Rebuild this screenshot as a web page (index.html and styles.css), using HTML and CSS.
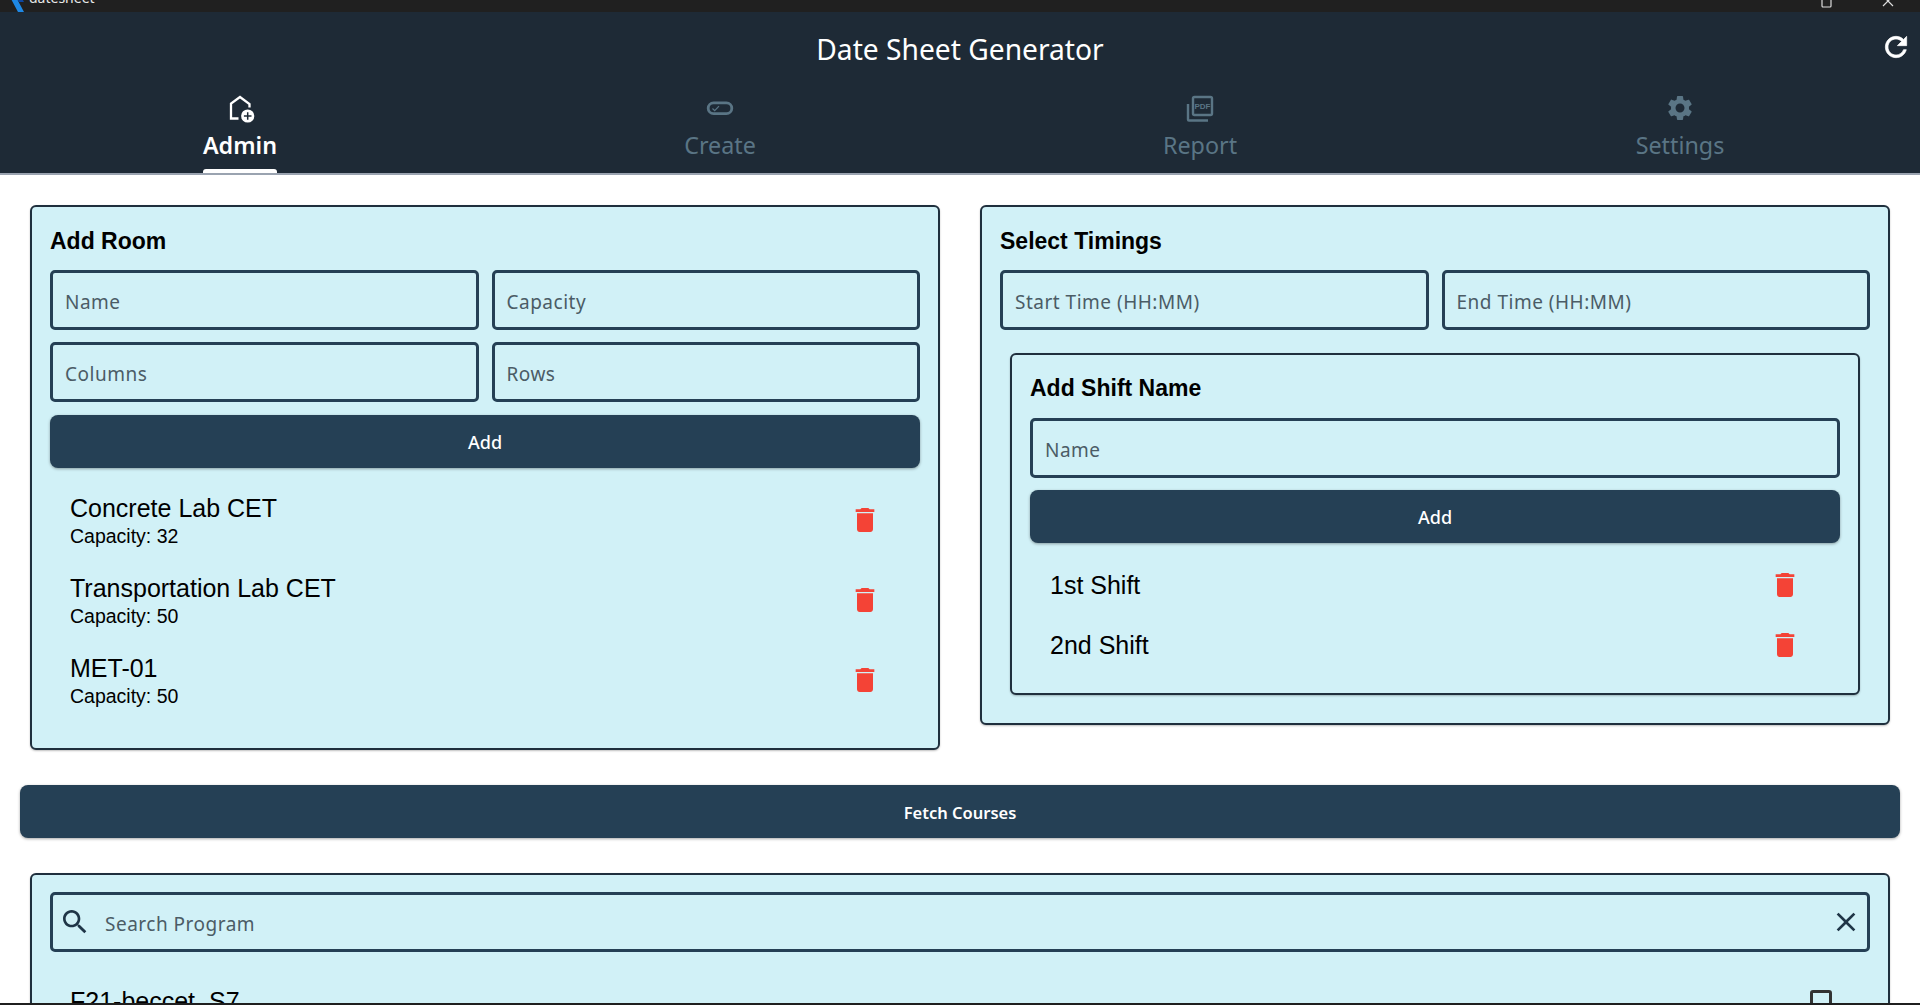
FILE: index.html
```html
<!DOCTYPE html>
<html>
<head>
	<title>datesheet</title>
	<link rel="stylesheet" href="styles.css">
</head>
<body>
	<div class="window-bar">
		<div class="window-row">
			<svg class="app-logo" viewBox="0 0 14 30"><path fill="#1e88e5" d="M8 0h6l-8 15 8 15H8L0 15z"/><path fill="#0d47a1" d="M6 15l3-4 5 9-5 0z"/></svg>
			<span class="window-name">datesheet</span>
			<span class="window-spacer"></span>
			<svg class="window-ctl" viewBox="0 0 12 30"><rect x="1" y="16" width="9" height="9" rx="1" fill="none" stroke="#ddd" stroke-width="1.2"/></svg>
			<svg class="window-ctl" viewBox="0 0 12 30"><path d="M1 14l10 10M11 14L1 24" stroke="#ddd" stroke-width="1.2"/></svg>
		</div>
	</div>

	<header class="app-header">
		<div class="title-row">
			<h1 class="app-title">Date Sheet Generator</h1>
			<svg class="refresh" viewBox="0 0 24 24"><path d="M17.65 6.35C16.2 4.9 14.21 4 12 4c-4.42 0-7.99 3.58-7.99 8s3.57 8 7.99 8c3.73 0 6.84-2.55 7.73-6h-2.08c-.82 2.33-3.04 4-5.65 4-3.31 0-6-2.69-6-6s2.69-6 6-6c1.66 0 3.14.69 4.22 1.78L13 11h7V4l-2.35 2.35z"/></svg>
		</div>
		<nav class="tabs">
			<div class="tab active">
				<svg class="tab-icon" viewBox="0 0 32 32">
					<path d="M14.5 26.5H7V11.5L16 5l9.5 7v3.5" fill="none" stroke="currentColor" stroke-width="2.3"/>
					<circle cx="23.7" cy="24" r="6.6" fill="currentColor"/>
					<path d="M23.7 20.2v7.6M19.9 24h7.6" stroke="#1e2a36" stroke-width="1.5"/>
				</svg>
				<span class="tab-label">Admin</span>
			</div>
			<div class="tab">
				<svg class="tab-icon" viewBox="0 0 32 32">
					<rect x="4.2" y="10.8" width="23.6" height="10.8" rx="5.4" fill="none" stroke="currentColor" stroke-width="2.8"/>
					<path d="M8.5 16.5l2.2 2.2 4.3-4.6" fill="none" stroke="currentColor" stroke-width="1.2"/>
				</svg>
				<span class="tab-label">Create</span>
			</div>
			<div class="tab">
				<svg class="tab-icon" viewBox="0 0 32 32">
					<rect x="9" y="5" width="19" height="18" rx="1.5" fill="none" stroke="currentColor" stroke-width="2.4"/>
					<path d="M4 12v15.5a1 1 0 0 0 1 1h19" fill="none" stroke="currentColor" stroke-width="2.4"/>
					<text class="pdf-mark" x="18.5" y="17" text-anchor="middle">PDF</text>
				</svg>
				<span class="tab-label">Report</span>
			</div>
			<div class="tab">
				<svg class="tab-icon gear" viewBox="0 0 24 24"><path d="M19.14 12.94c.04-.3.06-.61.06-.94 0-.32-.02-.64-.07-.94l2.03-1.58c.18-.14.23-.41.12-.61l-1.92-3.32c-.12-.22-.37-.29-.59-.22l-2.39.96c-.5-.38-1.03-.7-1.62-.94l-.36-2.54c-.04-.24-.24-.41-.48-.41h-3.84c-.24 0-.43.17-.47.41l-.36 2.54c-.59.24-1.13.57-1.62.94l-2.39-.96c-.22-.08-.47 0-.59.22L2.74 8.87c-.12.21-.08.47.12.61l2.03 1.58c-.05.3-.09.63-.09.94s.02.64.07.94l-2.03 1.58c-.18.14-.23.41-.12.61l1.92 3.32c.12.22.37.29.59.22l2.39-.96c.5.38 1.03.7 1.62.94l.36 2.54c.05.24.24.41.48.41h3.84c.24 0 .44-.17.47-.41l.36-2.54c.59-.24 1.13-.56 1.62-.94l2.39.96c.22.08.47 0 .59-.22l1.92-3.32c.12-.22.07-.47-.12-.61l-2.01-1.58zM12 15.6c-1.98 0-3.6-1.62-3.6-3.6s1.62-3.6 3.6-3.6 3.6 1.62 3.6 3.6-1.62 3.6-3.6 3.6z"/></svg>
				<span class="tab-label">Settings</span>
			</div>
		</nav>
	</header>

	<main class="content">
		<div class="columns">
			<section class="card">
				<h2 class="card-title">Add Room</h2>
				<div class="field-grid">
					<input class="field" placeholder="Name">
					<input class="field" placeholder="Capacity">
					<input class="field" placeholder="Columns">
					<input class="field" placeholder="Rows">
				</div>
				<button class="btn" type="button">Add</button>
				<ul class="room-list">
					<li class="room">
						<div>
							<div class="item-name">Concrete Lab CET</div>
							<div class="item-sub">Capacity: 32</div>
						</div>
						<svg class="trash" viewBox="0 0 24 24"><path d="M6 19c0 1.1.9 2 2 2h8c1.1 0 2-.9 2-2V7H6v12zM19 4h-3.5l-1-1h-5l-1 1H5v2h14V4z"/></svg>
					</li>
					<li class="room">
						<div>
							<div class="item-name">Transportation Lab CET</div>
							<div class="item-sub">Capacity: 50</div>
						</div>
						<svg class="trash" viewBox="0 0 24 24"><path d="M6 19c0 1.1.9 2 2 2h8c1.1 0 2-.9 2-2V7H6v12zM19 4h-3.5l-1-1h-5l-1 1H5v2h14V4z"/></svg>
					</li>
					<li class="room">
						<div>
							<div class="item-name">MET-01</div>
							<div class="item-sub">Capacity: 50</div>
						</div>
						<svg class="trash" viewBox="0 0 24 24"><path d="M6 19c0 1.1.9 2 2 2h8c1.1 0 2-.9 2-2V7H6v12zM19 4h-3.5l-1-1h-5l-1 1H5v2h14V4z"/></svg>
					</li>
				</ul>
			</section>

			<section class="card">
				<h2 class="card-title">Select Timings</h2>
				<div class="field-grid">
					<input class="field" placeholder="Start Time (HH:MM)">
					<input class="field" placeholder="End Time (HH:MM)">
				</div>
				<div class="card inner-card">
					<h2 class="card-title">Add Shift Name</h2>
					<input class="field" placeholder="Name">
					<button class="btn" type="button">Add</button>
					<ul class="shift-list">
						<li class="shift">
							<span class="item-name">1st Shift</span>
							<svg class="trash" viewBox="0 0 24 24"><path d="M6 19c0 1.1.9 2 2 2h8c1.1 0 2-.9 2-2V7H6v12zM19 4h-3.5l-1-1h-5l-1 1H5v2h14V4z"/></svg>
						</li>
						<li class="shift">
							<span class="item-name">2nd Shift</span>
							<svg class="trash" viewBox="0 0 24 24"><path d="M6 19c0 1.1.9 2 2 2h8c1.1 0 2-.9 2-2V7H6v12zM19 4h-3.5l-1-1h-5l-1 1H5v2h14V4z"/></svg>
						</li>
					</ul>
				</div>
			</section>
		</div>

		<button class="btn fetch" type="button">Fetch Courses</button>

		<section class="card programs">
			<div class="field search">
				<svg class="search-icon" viewBox="0 0 24 24"><path d="M15.5 14h-.79l-.28-.27C15.41 12.59 16 11.11 16 9.5 16 5.91 13.09 3 9.5 3S3 5.91 3 9.5 5.91 16 9.5 16c1.61 0 3.09-.59 4.23-1.57l.27.28v.79l5 4.99L20.49 19l-4.99-5zm-6 0C7.01 14 5 11.99 5 9.5S7.01 5 9.5 5 14 7.01 14 9.5 11.99 14 9.5 14z"/></svg>
				<input class="search-input" placeholder="Search Program">
				<svg class="close-icon" viewBox="0 0 24 24"><path d="M19 6.41L17.59 5 12 10.59 6.41 5 5 6.41 10.59 12 5 17.59 6.41 19 12 13.41 17.59 19 19 17.59 13.41 12z"/></svg>
			</div>
			<div class="program">
				<span class="item-name">F21-beccet_S7</span>
				<span class="checkbox"></span>
			</div>
		</section>
	</main>

	<div class="taskbar-edge"></div>
</body>
</html>
```

FILE: styles.css
```css
* {
	box-sizing: border-box;
}

html, body {
	margin: 0;
	height: 100%;
}

body {
	display: flex;
	flex-direction: column;
	height: 1005px;
	overflow: hidden;
	background-color: #fff;
	font-family: 'Noto Sans', sans-serif;
}

/* window chrome, only its lower edge is on screen */
.window-bar {
	height: 12px;
	flex: none;
	overflow: hidden;
	background-color: #202020;
}
.window-row {
	display: flex;
	align-items: center;
	height: 30px;
	margin-top: -18px;
	padding: 0 26px 0 10px;
	color: #e8e8e8;
	font-size: 14px;
}
.app-logo {
	width: 14px;
	height: 30px;
	margin-right: 5px;
}
.window-spacer {
	flex: 1;
}
.window-ctl {
	width: 12px;
	height: 30px;
	margin-left: 49px;
}

.app-header {
	flex: none;
	height: 163px;
	background-color: #1e2a36;
	border-bottom: 2px solid #9aa3b0;
}
.title-row {
	display: flex;
	align-items: center;
	justify-content: center;
	position: relative;
	height: 76px;
	padding-bottom: 2px;
}
.app-title {
	margin: 0;
	color: #fff;
	font-size: 28.2px;
	font-weight: 400;
}
.refresh {
	position: absolute;
	right: 8px;
	top: 19px;
	width: 32px;
	height: 32px;
	fill: #fff;
	stroke: #fff;
	stroke-width: 0.5;
}

.tabs {
	display: flex;
}
.tab {
	flex: 1;
	display: flex;
	flex-direction: column;
	align-items: center;
	padding-top: 4px;
	color: #5a7585;
}
.tab.active {
	color: #fff;
}
.tab-icon {
	display: block;
	width: 32px;
	height: 32px;
	fill: currentColor;
}
.gear {
	padding: 1px;
}
.pdf-mark {
	font-family: 'Liberation Sans', sans-serif;
	font-size: 8px;
	font-weight: bold;
}
.tab-label {
	position: relative;
	line-height: 42px;
	font-size: 23.3px;
}
.tab.active .tab-label {
	font-weight: 600;
}
.tab.active .tab-label::after {
	content: "";
	position: absolute;
	left: 0;
	right: 0;
	bottom: -7px;
	height: 4px;
	border-radius: 3px 3px 0 0;
	background-color: #fff;
}

.content {
	flex: 1;
	min-height: 0;
	overflow: hidden;
}
.columns {
	display: flex;
	align-items: flex-start;
	gap: 40px;
	padding: 30px 30px 0;
}
.columns > .card {
	flex: 1;
}

.card {
	padding: 18px;
	background-color: #d1f1f7;
	border: 2px solid #1f2f3d;
	border-radius: 6px;
	box-shadow: 0 1px 2px rgba(0, 0, 0, 0.25);
}
.card-title {
	margin: 0 0 13px;
	color: #000;
	font-family: 'Liberation Sans', sans-serif;
	font-size: 23px;
	font-weight: bold;
	line-height: 32px;
}

.field-grid {
	display: grid;
	grid-template-columns: 1fr 1fr;
	gap: 12px 13px;
}
.field {
	display: block;
	width: 100%;
	height: 60px;
	padding: 4px 12px 0;
	background-color: transparent;
	border: 3px solid #254055;
	border-radius: 5px;
	outline: none;
	font-family: 'Noto Sans', sans-serif;
	font-size: 19px;
	letter-spacing: 0.5px;
}
.field::placeholder,
.search-input::placeholder {
	color: #4b5c66;
	opacity: 1;
}

.btn {
	display: block;
	width: 100%;
	height: 53px;
	margin-top: 13px;
	color: #fff;
	background-color: #254055;
	border: none;
	border-radius: 8px;
	box-shadow: 0 1px 3px rgba(0, 0, 0, 0.35);
	font-family: 'Noto Sans', sans-serif;
	font-size: 18px;
	font-weight: 500;
}

.room-list,
.shift-list {
	margin: 0;
	padding: 0;
	list-style: none;
}
.room-list {
	margin: 12px 0 10px;
}
.shift-list {
	margin-top: 12px;
}
.room,
.shift {
	display: flex;
	align-items: center;
	justify-content: space-between;
}
.room {
	height: 80px;
	padding: 0 39px 0 20px;
}
.shift {
	height: 60px;
	padding: 0 39px 0 20px;
}
.item-name {
	color: #000;
	font-family: 'Liberation Sans', sans-serif;
	font-size: 25px;
	line-height: 32px;
}
.item-sub {
	margin-top: -1px;
	color: #000;
	font-family: 'Liberation Sans', sans-serif;
	font-size: 19.5px;
	line-height: 26px;
}
.trash {
	flex: none;
	width: 32px;
	height: 32px;
	fill: #f44336;
}

.inner-card {
	margin: 23px 10px 10px;
	padding: 17px 18px 18px;
	box-shadow: 0 1px 2px rgba(0, 0, 0, 0.25);
}
.inner-card .card-title {
	margin-bottom: 14px;
}
.inner-card .btn {
	margin-top: 12px;
}

.fetch {
	width: calc(100% - 40px);
	margin: 35px 20px 0;
	padding-top: 2px;
	font-size: 16.5px;
	font-weight: 600;
}

.programs {
	height: 240px;
	margin: 35px 30px 0;
	padding-top: 17px;
}
.search {
	display: flex;
	align-items: center;
	padding: 0 5px 0 6px;
}
.search-icon,
.close-icon {
	flex: none;
	fill: #1f3547;
}
.search-icon {
	width: 32px;
	height: 32px;
}
.close-icon {
	width: 32px;
	height: 32px;
}
.search-input {
	flex: 1;
	min-width: 0;
	height: 100%;
	padding: 4px 0 0 14px;
	background: transparent;
	border: none;
	outline: none;
	font-family: 'Noto Sans', sans-serif;
	font-size: 19px;
	letter-spacing: 0.5px;
}
.program {
	display: flex;
	align-items: center;
	justify-content: space-between;
	margin-top: 33px;
	padding: 0 38px 0 20px;
}
.checkbox {
	width: 22px;
	height: 22px;
	border: 3px solid #333;
	border-radius: 3px;
}

.taskbar-edge {
	flex: none;
	height: 2px;
	background-color: #1f1f1f;
}
```
